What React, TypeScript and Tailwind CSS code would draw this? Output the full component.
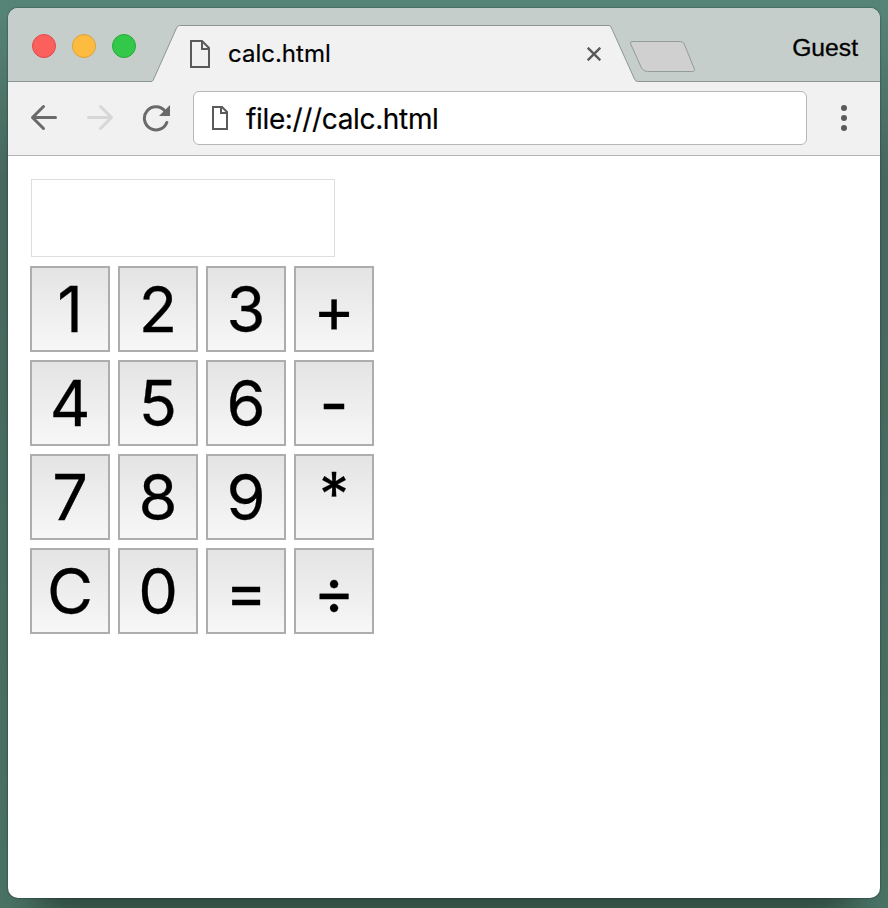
const keys = ["1", "2", "3", "+", "4", "5", "6", "-", "7", "8", "9", "*", "C", "0", "=", "÷"];

function PageIcon({ className }: { className: string }) {
  return (
    <svg className={className} viewBox="0 0 20 28" fill="none" stroke="#5a5a5a" strokeWidth="2">
      <path d="M1 1H12L19 8V27H1Z" />
      <path d="M12 1V9H19" />
    </svg>
  );
}

function TabStrip() {
  return (
    <div className="relative h-[74px] bg-[#c5cecb]">
      <svg className="absolute inset-0 h-[74px] w-[872px]" viewBox="0 0 872 74" fill="none">
        <path
          d="M0 73.5H143Q144.500 73.500 145.300 72L168.500 20Q169.800 17.500 171.500 17.500H601Q602.500 17.500 603.500 20L626.500 71Q627.700 73.500 629.500 73.500H872V74H0Z"
          fill="#f1f1f1"
        />
        <path
          d="M0 73.500H143Q144.500 73.500 145.300 72L168.500 20Q169.800 17.500 171.500 17.500H601Q602.500 17.500 603.500 20L626.500 71Q627.700 73.500 629.500 73.500H872"
          stroke="#8c9692"
        />
        <path
          d="M624 33.500H672.500Q675 33.500 676.200 36L686 60Q687.500 63.500 684.500 63.500H639.500Q635.500 63.500 633.500 60L622.700 36Q621.500 33.500 624 33.500Z"
          fill="#d0d0d0"
          stroke="#929c98"
        />
      </svg>
      <div className="relative flex h-full items-start">
        <div className="flex gap-4 pt-[26px] pl-6">
          <span className="size-6 rounded-full border border-[#e2484a] bg-[#fc605c]" />
          <span className="size-6 rounded-full border border-[#dfa035] bg-[#fdbc40]" />
          <span className="size-6 rounded-full border border-[#24aa35] bg-[#34c84a]" />
        </div>
        <div className="ml-[54px] flex h-[74px] w-[412px] items-start">
          <PageIcon className="mt-8 h-7 w-5" />
          <span className="mt-[31px] ml-[18px] text-[24px] leading-[30px] [-webkit-text-stroke:0.2px_black]">calc.html</span>
          <svg className="mt-[39px] mr-px ml-auto size-[14px]" viewBox="0 0 14 14" stroke="#5a5a5a" strokeWidth="2.400">
            <path d="M.7.7 13.300 13.300M13.300.7.7 13.300" />
          </svg>
        </div>
        <span className="mt-[25px] mr-[22px] ml-auto font-['Liberation_Sans',sans-serif] text-[24.700px] leading-[30px] [-webkit-text-stroke:0.3px_black]">Guest</span>
      </div>
    </div>
  );
}

function Toolbar() {
  return (
    <div className="flex h-[74px] items-start border-b border-[#b4b4b4] bg-[#f1f1f1]">
      <svg className="mt-[22px] ml-[22px] h-7 w-[28px]" viewBox="0 0 28 28" fill="none" stroke="#6a6a6a" strokeWidth="3" strokeLinecap="round" strokeLinejoin="round">
        <path d="M25.500 13.500H2.500M13.500 2.500 2.500 13.500 13.500 24.500" />
      </svg>
      <svg className="mt-[22px] ml-[28px] h-7 w-[28px]" viewBox="0 0 28 28" fill="none" stroke="#d7d7d7" strokeWidth="3" strokeLinecap="round" strokeLinejoin="round">
        <path d="M2.500 13.500H25.500M14.500 2.500 25.500 13.500 14.500 24.500" />
      </svg>
      <svg className="mt-[22px] ml-[27px] h-7 w-[30px]" viewBox="0 0 30 28" fill="none">
        <path d="M25.800 18.500A11.600 11.600 0 1 1 24 7" stroke="#6a6a6a" strokeWidth="3" strokeLinecap="round" />
        <path d="M29 1V12H18Z" fill="#6a6a6a" />
      </svg>
      <div className="mt-[9px] ml-[22px] flex h-[54px] w-[614px] items-center rounded-[6px] border border-[#b6b6b6] bg-white pl-[18px]">
        <svg className="h-6 w-4" viewBox="0 0 16 24" fill="none" stroke="#5a5a5a" strokeWidth="2">
          <path d="M1 1H10L15 6V23H1Z" />
          <path d="M9 1V7H15" />
        </svg>
        <span className="mt-[2px] ml-[18px] text-[28px] leading-[36px] tracking-[-0.35px] [-webkit-text-stroke:0.2px_black]">file:///calc.html</span>
      </div>
      <svg className="mt-[22px] ml-[34px] h-7 w-[6px]" viewBox="0 0 6 28" fill="#5a5a5a">
        <circle cx="3" cy="4" r="3" />
        <circle cx="3" cy="14" r="3" />
        <circle cx="3" cy="24" r="3" />
      </svg>
    </div>
  );
}

export default function App() {
  return (
    <div className="h-[908px] w-[888px] overflow-hidden bg-linear-to-b from-[#568577] via-[#47695f] via-20% to-[#4a7366] p-2 font-[Inter,sans-serif] text-black">
      <div className="h-[890px] w-[872px] overflow-hidden rounded-[10px] bg-white shadow-[0_0_2px_rgba(0,0,0,0.6),0_44px_36px_-28px_rgba(0,0,0,0.42)]">
        <TabStrip />
        <Toolbar />
        <main className="pt-[23px] pl-[22px]">
          <input aria-label="Result" readOnly className="ml-px block h-[78px] w-[304px] border border-[#dedede] bg-white outline-none" />
          <div className="mt-[9px] grid w-[344px] grid-cols-4 gap-2">
            {keys.map((key) => (
              <button
                key={key}
                className="flex h-[86px] items-center justify-center border-2 border-[#adadad] bg-linear-to-b from-[#e4e4e4] to-[#f7f7f7] text-[63px] leading-[78px] [-webkit-text-stroke:0.3px_black]"
              >
                <span className={key === "*" ? "-mt-[7px] text-[60px]" : ""}>{key}</span>
              </button>
            ))}
          </div>
        </main>
      </div>
    </div>
  );
}
